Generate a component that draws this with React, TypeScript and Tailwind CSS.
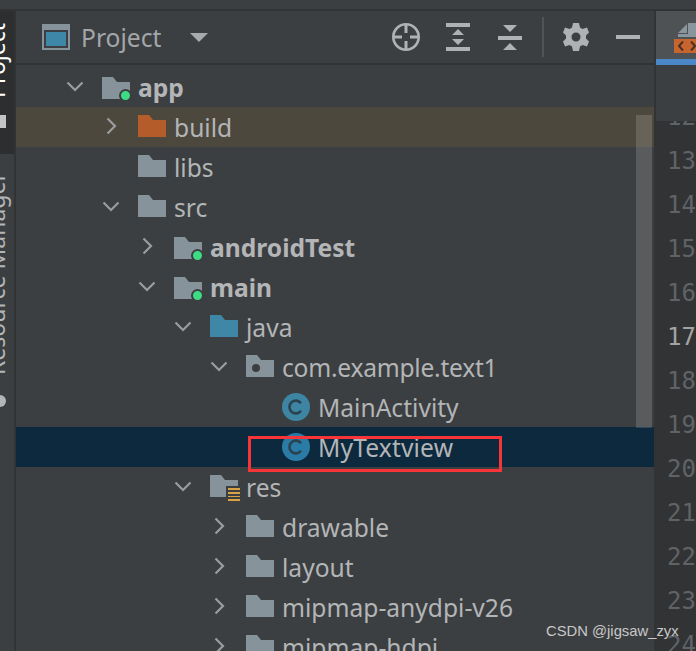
const font = "font-['Noto_Sans','Open_Sans',sans-serif]";

function Folder({ color = "#87939a" }: { color?: string }) {
  return (
    <svg width="28" height="22" viewBox="0 0 28 22" className="block">
      <path d="M0 0H11L15 5H28V22H0Z" fill={color} />
    </svg>
  );
}

function FolderIcon({ kind }: { kind: string }) {
  if (kind === "class" || kind === "classSel") {
    return (
      <svg width="28" height="28" viewBox="0 0 28 28" className="block">
        <circle cx="14" cy="14" r="14" fill={kind === "class" ? "#3d85a3" : "#2a7ba6"} />
        <path d="M19 10.2A6.4 6.4 0 1 0 19 17.8" fill="none" stroke="#2b4350" strokeWidth="2.6" />
      </svg>
    );
  }
  return (
    <div className={kind === "module" ? "relative translate-y-px" : "relative -translate-y-px"}>
      <Folder color={kind === "build" ? "#b55c2b" : kind === "java" ? "#3f87a6" : "#87939a"} />
      {kind === "module" && (
        <span className="absolute left-[17px] top-[12px] h-[13px] w-[13px] rounded-full border-2 border-[#3c3f41] bg-[#3ddc84]" />
      )}
      {kind === "package" && <span className="absolute left-[6px] top-[9px] h-[8px] w-[8px] rounded-full bg-[#3c3f41]" />}
      {kind === "res" && (
        <span className="absolute left-[16px] top-[11px] flex h-[17px] w-[15px] flex-col gap-[2px] bg-[#3c3f41] py-[2px] pl-[2px] pr-[1px]">
          <i className="h-[2px] bg-[#d9a343]" />
          <i className="h-[2px] bg-[#d9a343]" />
          <i className="h-[2px] bg-[#d9a343]" />
          <i className="h-[2px] bg-[#d9a343]" />
        </span>
      )}
    </div>
  );
}

function Chevron({ dir }: { dir: string }) {
  if (dir === "down")
    return (
      <svg width="18" height="11" viewBox="0 0 18 11" className="block -translate-y-px">
        <path d="M1.5 1.5L9 9L16.5 1.5" fill="none" stroke="#9a9c9e" strokeWidth="2.2" />
      </svg>
    );
  return (
    <svg width="11" height="18" viewBox="0 0 11 18" className="block -translate-y-px">
      <path d="M1.5 1.5L9 9L1.5 16.5" fill="none" stroke="#9a9c9e" strokeWidth="2.2" />
    </svg>
  );
}

type Row = { label: string; depth: number; kind: string; arrow?: string; bold?: boolean; bg?: string; text?: string };

const rows: Row[] = [
  { label: "app", depth: 0, kind: "module", arrow: "down", bold: true },
  { label: "build", depth: 1, kind: "build", arrow: "right", bg: "bg-[#4d483d]" },
  { label: "libs", depth: 1, kind: "folder" },
  { label: "src", depth: 1, kind: "folder", arrow: "down" },
  { label: "androidTest", depth: 2, kind: "module", arrow: "right", bold: true },
  { label: "main", depth: 2, kind: "module", arrow: "down", bold: true },
  { label: "java", depth: 3, kind: "java", arrow: "down" },
  { label: "com.example.text1", depth: 4, kind: "package", arrow: "down", text: "tracking-[-0.25px]" },
  { label: "MainActivity", depth: 5, kind: "class" },
  { label: "MyTextview", depth: 5, kind: "classSel", bg: "bg-[#0d293e]", text: "tracking-[0.15px]" },
  { label: "res", depth: 3, kind: "res", arrow: "down" },
  { label: "drawable", depth: 4, kind: "folder", arrow: "right" },
  { label: "layout", depth: 4, kind: "folder", arrow: "right" },
  { label: "mipmap-anydpi-v26", depth: 4, kind: "folder", arrow: "right" },
  { label: "mipmap-hdpi", depth: 4, kind: "folder", arrow: "right" },
];

const indents = ["pl-[41px]", "pl-[77px]", "pl-[113px]", "pl-[149px]", "pl-[185px]", "pl-[221px]"];

function TreeRow({ row }: { row: Row }) {
  return (
    <div className={`flex h-[40px] shrink-0 items-center ${indents[row.depth]} ${row.bg ?? ""}`}>
      <div className="flex w-[45px] shrink-0 justify-center pr-[9px]">{row.arrow && <Chevron dir={row.arrow} />}</div>
      <div className="w-[36px] shrink-0">
        <FolderIcon kind={row.kind} />
      </div>
      <span
        className={`translate-y-px whitespace-nowrap text-[24.6px] leading-[40px] text-[#b3b5b7] ${row.bold ? "font-bold" : ""} ${row.text ?? ""}`}
      >
        {row.label}
      </span>
    </div>
  );
}

function ToolIcons() {
  return (
    <div className="flex items-center">
      <svg width="28" height="28" viewBox="0 0 28 28" className="block">
        <circle cx="14" cy="14" r="12.7" fill="none" stroke="#afb1b3" strokeWidth="2.6" />
        <path d="M14 1V10M14 18V27M1 14H10M18 14H27" stroke="#afb1b3" strokeWidth="3" />
      </svg>
      <svg width="24" height="28" viewBox="0 0 24 28" className="ml-[26px] block">
        <path d="M0 0H24V4H0ZM0 24H24V28H0ZM12 6L18 12H6ZM12 22L6 16H18Z" fill="#afb1b3" />
      </svg>
      <svg width="24" height="26" viewBox="0 0 24 26" className="ml-[28px] block">
        <path d="M0 12H24V16H0ZM5 1H19L12 8ZM12 19L19 26H5Z" fill="#afb1b3" />
      </svg>
      <div className="ml-[20px] h-[40px] w-[2px] bg-[#515355]" />
      <svg width="26" height="28" viewBox="0 0 26 28" className="ml-[19px] block">
        <path
          fillRule="evenodd"
          fill="#afb1b3"
          d="M10 0H16L17 4.5L19.5 6L24 4.5L26 9.5L23 12.5V15.5L26 18.5L24 23.5L19.5 22L17 23.5L16 28H10L9 23.5L6.5 22L2 23.5L0 18.5L3 15.5V12.5L0 9.5L2 4.5L6.5 6L9 4.5ZM13 9.5A4.5 4.5 0 1 0 13 18.5A4.5 4.5 0 1 0 13 9.5Z"
        />
      </svg>
      <div className="ml-[27px] h-[4px] w-[24px] bg-[#afb1b3]" />
    </div>
  );
}

function Sidebar() {
  return (
    <div className="flex w-[16px] shrink-0 flex-col overflow-hidden border-r-2 border-[#323335] bg-[#3c3f41]">
      <div className="flex h-[143px] shrink-0 flex-col items-end overflow-hidden bg-[#2c2e2f]">
        <span className="h-[104px] w-[20px] shrink-0 whitespace-nowrap text-[23px] leading-[20px] text-white [writing-mode:vertical-rl] rotate-180 translate-x-[-8px] translate-y-[-17px]">
          Project
        </span>
        <i className="h-[13px] w-[6px] shrink-0 self-start bg-[#c4c4c4]" />
      </div>
      <span className="mt-[23px] h-[198px] w-[20px] shrink-0 self-end whitespace-nowrap text-[23px] leading-[20px] text-[#b3b5b7] [writing-mode:vertical-rl] rotate-180 translate-x-[-8px]">
        Resource Manager
      </span>
      <i className="mt-[20px] h-[12px] w-[12px] shrink-0 translate-x-[-6px] rounded-full bg-[#b3b5b7]" />
    </div>
  );
}

const lines = [12, 13, 14, 15, 16, 17, 18, 19, 20, 21, 22, 23, 24];

function Editor() {
  return (
    <div className="flex w-[40px] shrink-0 flex-col overflow-hidden bg-[#313335]">
      <div className="flex h-[48px] shrink-0 flex-col gap-[2px] overflow-hidden bg-[#4e5254] pl-[18px] pt-[12px]">
        <svg width="24" height="14" viewBox="0 0 24 14" className="ml-[4px] block shrink-0">
          <path d="M0 10L9 1V10ZM0 14V11H10V0H24V14Z" fill="#8a969d" />
        </svg>
        <div className="flex h-[14px] w-[30px] shrink-0 items-center bg-[#c7652f] pl-[4px]">
          <svg width="18" height="10" viewBox="0 0 18 10" className="block">
            <path d="M5 0.5L1 5L5 9.5M13 0.5L17 5L13 9.5" fill="none" stroke="#4a3025" strokeWidth="2" />
          </svg>
        </div>
      </div>
      <div className="h-[6px] shrink-0 bg-[#4a88c7]" />
      <div className="h-[56px] shrink-0 bg-[#3c3f41]" />
      <div className="flex-1 overflow-hidden">
        <div className="mt-[-26px] flex flex-col pl-[11px] font-['DejaVu_Sans_Mono',monospace] text-[24px] leading-[44px]">
          {lines.map((n) => (
            <span key={n} className={n === 17 ? "h-[44px] text-[#a4a3a3]" : "h-[44px] text-[#606366]"}>
              {n}
            </span>
          ))}
        </div>
      </div>
    </div>
  );
}

export default function App() {
  return (
    <div className={`relative flex h-[651px] w-[696px] flex-col overflow-hidden bg-[#3c3f41] ${font}`}>
      <div className="h-[9px] shrink-0 bg-[#3c3f41]" />
      <div className="h-[2px] shrink-0 bg-[#313335]" />
      <div className="flex min-h-0 flex-1">
        <Sidebar />
        <div className="relative flex w-[638px] shrink-0 flex-col overflow-hidden">
          <div className="flex h-[52px] shrink-0 items-center pl-[26px]">
            <svg width="28" height="26" viewBox="0 0 28 26" className="block">
              <path d="M0 0H28V26H0Z" fill="#87939a" />
              <path d="M2 6H26V24H2Z" fill="#3c3f41" />
              <path d="M4 8H24V22H4Z" fill="#3f87a6" />
            </svg>
            <span className="ml-[11px] translate-y-px text-[24.6px] leading-[40px] text-[#a4a7aa]">Project</span>
            <svg width="18" height="9" viewBox="0 0 18 9" className="ml-[29px] block">
              <path d="M0 0H18L9 9Z" fill="#a8aaac" />
            </svg>
            <div className="ml-[183px] translate-x-[1px]">
              <ToolIcons />
            </div>
          </div>
          <div className="h-[2px] shrink-0 bg-[#313335]" />
          <div className="h-[2px] shrink-0" />
          <div className="flex min-h-0 flex-1 flex-col overflow-hidden">
            {rows.map((row) => (
              <TreeRow key={row.label} row={row} />
            ))}
          </div>
          <div className="absolute left-[620px] top-[104px] h-[313px] w-[16px] bg-white/15" />
        </div>
        <div className="w-[2px] shrink-0 bg-[#313335]" />
        <Editor />
      </div>
      <div className="absolute left-[248px] top-[436px] h-[36px] w-[254px] border-[3px] border-[#f73437]" />
      <span className="absolute left-[546px] top-[621px] font-['Liberation_Sans',sans-serif] text-[14.8px] leading-[20px] text-[#c8c8c8]">
        CSDN @jigsaw_zyx
      </span>
    </div>
  );
}
